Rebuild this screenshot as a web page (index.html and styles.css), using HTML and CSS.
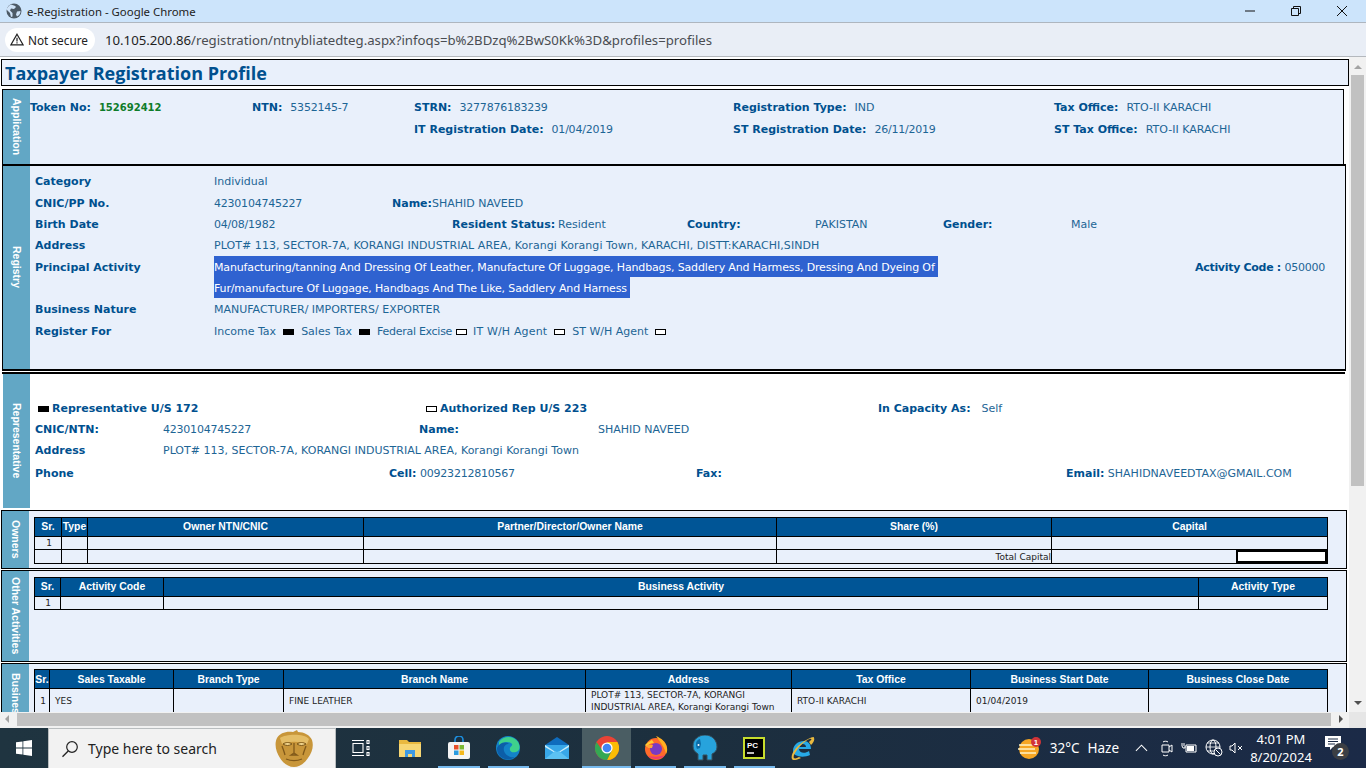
FILE: index.html
```html
<!DOCTYPE html>
<html lang="en">

<head>
    <meta charset="UTF-8">
    <meta name="viewport" content="width=device-width, initial-scale=1.0">
    <title>e-Registration - Google Chrome</title>
    <link rel="stylesheet" href="styles.css">
</head>

<body>
    <div class="titlebar">
        <svg class="globe" width="16" height="16" viewBox="0 0 16 16"><circle cx="8" cy="8" r="7.5" fill="#4d5a66"/><path d="M5 1.5c2 1 4 1 5 2.5l-2 2-3-.5-1 2 2.5 2.5v3.500l-1.500.5-1-4-3.500-3.500C1.500 4 3 2.500 5 1.500zM11 8.500l3.500-.5c0 2.500-1 4.500-3.500 5.500l-1-2z" fill="#cfe3f8"/></svg>
        <span class="wintitle">e-Registration - Google Chrome</span>
        <div class="wincontrols">
            <svg width="12" height="12" viewBox="0 0 12 12"><path d="M1 6h10" stroke="#111" fill="none"/></svg>
            <svg width="12" height="12" viewBox="0 0 12 12"><path d="M1.5 3.500h7v7h-7zM3.500 3.500v-2h7v7h-2" stroke="#111" fill="none"/></svg>
            <svg width="12" height="12" viewBox="0 0 12 12"><path d="M1 1l10 10M11 1L1 11" stroke="#111" fill="none"/></svg>
        </div>
    </div>
    <div class="toolbar">
        <div class="secure">
            <svg width="14" height="13" viewBox="0 0 14 13"><path d="M7 1.200l6 10.600H1z" fill="none" stroke="#222" stroke-width="1.200"/><path d="M7 4.800v3.600M7 9.300v1.200" stroke="#222" stroke-width="1.200"/></svg>
            <span>Not secure</span>
        </div>
        <span class="url">10.105.200.86<span class="urlpath">/registration/ntnybliatedteg.aspx?infoqs=b%2BDzq%2BwS0Kk%3D&amp;profiles=profiles</span></span>
    </div>

    <div class="browser">
        <div class="viewport">
            <div class="page">
                <h1 class="pagetitle">Taxpayer Registration Profile</h1>

                <section class="panel panel-app">
                    <div class="side"><span>Application</span></div>
                    <div class="app-grid">
                        <div class="app-token"><b>Token No:</b><b class="token">152692412</b></div>
                        <div><b>NTN:</b><span class="n">5352145-7</span></div>
                        <div><b>STRN:</b><span class="n">3277876183239</span></div>
                        <div><b>Registration Type:</b><span>IND</span></div>
                        <div><b>Tax Office:</b><span>RTO-II KARACHI</span></div>
                        <div></div>
                        <div></div>
                        <div><b>IT Registration Date:</b><span class="n">01/04/2019</span></div>
                        <div><b>ST Registration Date:</b><span class="n">26/11/2019</span></div>
                        <div><b>ST Tax Office:</b><span>RTO-II KARACHI</span></div>
                    </div>
                </section>

                <section class="panel panel-reg">
                    <div class="side"><span>Registry</span></div>
                    <div class="reg-body">
                        <div class="row"><b>Category</b><span>Individual</span></div>
                        <div class="row row-name"><b>CNIC/PP No.</b><span class="n">4230104745227</span><span><b>Name:</b>SHAHID NAVEED</span></div>
                        <div class="row row-birth"><b>Birth Date</b><span class="n">04/08/1982</span><b>Resident Status:</b><span>Resident</span><b>Country:</b><span>PAKISTAN</span><b>Gender:</b><span>Male</span></div>
                        <div class="row"><b>Address</b><span class="wide">PLOT# 113, SECTOR-7A, KORANGI INDUSTRIAL AREA, Korangi Korangi Town, KARACHI, DISTT:KARACHI,SINDH</span></div>
                        <div class="row row-activity">
                            <b>Principal Activity</b>
                            <div class="activity-text"><span class="picked">Manufacturing/tanning And Dressing Of Leather, Manufacture Of Luggage, Handbags, Saddlery And Harmess, Dressing And Dyeing Of<br>Fur/manufacture Of Luggage, Handbags And The Like, Saddlery And Harness</span></div>
                            <div class="activity-code"><b>Activity Code :</b> <span class="n">050000</span></div>
                        </div>
                        <div class="row"><b>Business Nature</b><span>MANUFACTURER/ IMPORTERS/ EXPORTER</span></div>
                        <div class="row row-register">
                            <b>Register For</b>
                            <div class="checks">
                                <span>Income Tax</span><i class="box on"></i>
                                <span>Sales Tax</span><i class="box on"></i>
                                <span class="tight-text">Federal Excise</span><i class="box tight"></i>
                                <span class="wide-text">IT W/H Agent</span><i class="box"></i>
                                <span>ST W/H Agent</span><i class="box"></i>
                            </div>
                        </div>
                    </div>
                </section>

                <section class="panel-rep">
                    <div class="side"><span>Representative</span></div>
                    <div class="rep-body">
                        <div class="rep-top">
                            <div class="rep-a"><i class="box on"></i><b>Representative U/S 172</b></div>
                            <div class="rep-b"><i class="box"></i><b>Authorized Rep U/S 223</b></div>
                            <div><b>In Capacity As:</b><span class="gap">Self</span></div>
                        </div>
                        <div class="row row-cnic"><b>CNIC/NTN:</b><span class="n">4230104745227</span><b>Name:</b><span>SHAHID NAVEED</span></div>
                        <div class="row row-addr"><b>Address</b><span>PLOT# 113, SECTOR-7A, KORANGI INDUSTRIAL AREA, Korangi Korangi Town</span></div>
                        <div class="row row-phone"><b>Phone</b><div><b>Cell:</b> <span class="n">00923212810567</span></div><b>Fax:</b><div><b>Email:</b> SHAHIDNAVEEDTAX@GMAIL.COM</div></div>
                    </div>
                </section>

                <section class="panel panel-owners">
                    <div class="side"><span>Owners</span></div>
                    <div class="table-wrap">
                        <table class="grid t-owners">
                            <tr><th>Sr.</th><th>Type</th><th>Owner NTN/CNIC</th><th>Partner/Director/Owner Name</th><th>Share (%)</th><th>Capital</th></tr>
                            <tr><td class="num">1</td><td></td><td></td><td></td><td></td><td></td></tr>
                            <tr class="total"><td></td><td></td><td></td><td></td><td class="right">Total Capital</td><td class="capital-cell"><div class="capital-box"></div></td></tr>
                        </table>
                    </div>
                </section>

                <section class="panel panel-other">
                    <div class="side"><span>Other Activities</span></div>
                    <div class="table-wrap">
                        <table class="grid t-other">
                            <tr><th>Sr.</th><th>Activity Code</th><th>Business Activity</th><th>Activity Type</th></tr>
                            <tr><td class="num">1</td><td></td><td></td><td></td></tr>
                        </table>
                    </div>
                </section>

                <section class="panel panel-bus">
                    <div class="side"><span>Business</span></div>
                    <div class="table-wrap">
                        <table class="grid t-bus">
                            <tr><th>Sr.</th><th>Sales Taxable</th><th>Branch Type</th><th>Branch Name</th><th>Address</th><th>Tax Office</th><th>Business Start Date</th><th>Business Close Date</th></tr>
                            <tr class="tall"><td class="num">1</td><td>YES</td><td></td><td>FINE LEATHER</td><td class="addr">PLOT# 113, SECTOR-7A, KORANGI INDUSTRIAL AREA, Korangi Korangi Town</td><td>RTO-II KARACHI</td><td>01/04/2019</td><td></td></tr>
                        </table>
                    </div>
                </section>
            </div>
            <div class="vscroll">
                <i class="arrow up"></i>
                <div class="vthumb"></div>
                <i class="arrow down"></i>
            </div>
        </div>
        <div class="hscroll">
            <i class="arrow left"></i>
            <div class="hthumb"></div>
            <i class="arrow right"></i>
        </div>
    </div>

    <div class="taskbar">
        <div class="startbtn">
            <svg width="16" height="16" viewBox="0 0 16 16"><path d="M0 2.300l6.500-.9v6.200H0zM7.300 1.300L16 0v7.600H7.300zM0 8.400h6.500v6.200L0 13.700zM7.300 8.400H16V16l-8.700-1.300z" fill="#fff"/></svg>
        </div>
        <div class="searchbox">
            <svg width="18" height="18" viewBox="0 0 18 18"><circle cx="11" cy="7" r="5.300" fill="none" stroke="#222" stroke-width="1.200"/><path d="M7.200 11L1.500 16.800" stroke="#222" stroke-width="1.300"/></svg>
            <span>Type here to search</span>
            <svg class="mask" width="40" height="37" viewBox="0 0 40 37">
                <path d="M3 8C6 3 12 1 19 2l4-2 1 2c6 0 12 3 14 8 2 6 0 13-4 18-4 6-9 9-14 9-6 0-11-4-14-9C2 22 0 14 3 8z" fill="#c8963a"/>
                <path d="M6 8c5-4 24-5 29 1l-2 5c-6-3-20-3-25 0z" fill="#e4bd66"/>
                <path d="M9 14c3-2 6-2 9 0-3 2-6 2-9 0zM23 14c3-2 6-2 9 0-3 2-6 2-9 0z" fill="#f0d48c" stroke="#7a5516"/>
                <path d="M20 13v10l-3 2h6l-3-2M12 29c5 2 11 2 16 0M11 25c-1-4-2-6-3-9M29 25c1-4 2-6 3-9" stroke="#80591a" stroke-width="1.300" fill="none"/>
            </svg>
        </div>
        <div class="taskicons">
            <div class="tb">
                <svg width="20" height="18" viewBox="0 0 20 18"><path d="M1 1.500h12M1 16.500h12M2 4.500h10v9H2zM16 1.500h2v3h-2zM16 7.500h2v3h-2zM16 13.500h2v3h-2z" stroke="#fff" stroke-width="1.100" fill="none"/></svg>
            </div>
            <div class="tb">
                <svg width="22" height="18" viewBox="0 0 22 18"><path d="M0 1h8l2 2h12v15H0z" fill="#e9b93f"/><path d="M0 5h22v13H0z" fill="#f7d774"/><path d="M6 11h10v7h-3v-3H9v3H6z" fill="#3e9ae3"/></svg>
            </div>
            <div class="tb">
                <svg width="24" height="24" viewBox="0 0 24 24"><path d="M8 6V4a4 4 0 0 1 8 0v2" stroke="#1c8fe0" stroke-width="1.600" fill="none"/><rect x="1" y="6" width="22" height="17" rx="2" fill="#f4f4f4"/><rect x="7" y="9" width="4.500" height="4.500" fill="#e8502a"/><rect x="12.500" y="9" width="4.500" height="4.500" fill="#7cb934"/><rect x="7" y="14.500" width="4.500" height="4.500" fill="#2a9be0"/><rect x="12.500" y="14.500" width="4.500" height="4.500" fill="#f5b81c"/></svg>
                <i class="run"></i>
            </div>
            <div class="tb">
                <svg width="24" height="24" viewBox="0 0 24 24"><circle cx="12" cy="12" r="12" fill="#1383c8"/><path d="M3 6C7 0 17-1 22 6c2.500 4 2 9-2 10-4 1-7-1-6-4 .5-2 3-2 2-4-2-3-9-3-13 2z" fill="#3fd18c"/><path d="M1 12c2-5 8-7 12-4-4 0-6 3-5 7 1 4 6 7 11 6-5 4-12 3-16-2-1.500-2-2-4.500-2-7z" fill="#0c5ea8"/></svg>
                <i class="run"></i>
            </div>
            <div class="tb">
                <svg width="24" height="22" viewBox="0 0 24 22"><path d="M12 0L0 8l12 8 12-8z" fill="#0f6cbd"/><path d="M0 8h24v14H0z" fill="#38a7e8"/><path d="M0 8l12 8 12-8v2l-12 7L0 10z" fill="#c8ecfb"/><path d="M0 22l10-8 2 1 2-1 10 8z" fill="#5cc1f2"/></svg>
            </div>
            <div class="tb tb-active">
                <svg width="24" height="24" viewBox="0 0 24 24"><circle cx="12" cy="12" r="12" fill="#ea4335"/><path d="M12 24a12 12 0 0 0 10.400-18H12l5 8z" fill="#fbbc05"/><path d="M1.600 6a12 12 0 0 0 10.400 18l5-10-5 3z" fill="#34a853"/><path d="M1.600 6L7 14l5-7z" fill="#ea4335"/><circle cx="12" cy="12" r="5.600" fill="#fff"/><circle cx="12" cy="12" r="4.300" fill="#4285f4"/></svg>
                <i class="run wide"></i>
            </div>
            <div class="tb">
                <svg width="24" height="24" viewBox="0 0 24 24"><circle cx="12" cy="13" r="11" fill="#ff6a2a"/><path d="M12 0c5 2 10 6 11 12 .5 2 0 4-1 6-1-6-5-11-10-18z" fill="#ffb21f"/><path d="M1 9c3-3 7-5 7-5l2 3c-3 0-6 1-7 4z" fill="#ffcb2f"/><circle cx="12" cy="13" r="6" fill="#7a3ac2"/><path d="M2 9h7l-1 3H4z" fill="#ffa336"/><path d="M4 20c4 4 13 4 17-1-4 2-12 2-17 1z" fill="#f13a6f"/></svg>
                <i class="run"></i>
            </div>
            <div class="tb">
                <svg width="26" height="26" viewBox="0 0 26 26"><path d="M1 11C1 4 7 0 13 0c7 0 12 5 12 12 0 4-3 6-5 7v6h-5v-5h-4v5H6v-6c-3-2-5-4-5-8z" fill="#27a3dc" stroke="#36505e"/><path d="M8 4C4 5 3 9 5 14l3-1 1-4z" fill="#0d6da8"/><circle cx="6.500" cy="10" r="1" fill="#fff"/></svg>
                <i class="run"></i>
            </div>
            <div class="tb">
                <svg width="22" height="22" viewBox="0 0 22 22"><rect width="22" height="22" fill="#c7dd2d"/><rect x="2" y="2" width="18" height="18" fill="#000"/><text x="4" y="11" class="pc">PC</text><path d="M4 16h7" stroke="#fff" stroke-width="1.500"/></svg>
                <i class="run"></i>
            </div>
            <div class="tb">
                <svg width="24" height="24" viewBox="0 0 24 24"><path d="M2 15c0-6 5-10 11-10 4 0 7 3 7 8H8c0 4 6 5 10 2l1 4c-6 3-17 2-17-4zM8 11h7c0-4-6-4-7 0z" fill="#27a9e6"/><path d="M1 23c-2-4 4-14 16-20 4-2 6-3 6-1 1 2-1 5-3 7l-2-3c2-2 3-3 2-3-1-1-9 4-14 11-3 4-4 7-3 8 1 1 3 0 5-1l2 1c-4 2-8 3-9 1z" fill="#e9b93f"/></svg>
            </div>
        </div>
        <div class="tray">
            <svg class="weather" width="24" height="22" viewBox="0 0 24 22"><circle cx="11" cy="12" r="10" fill="#f6a623"/><path d="M1 8h14M0 12h17M2 16h16" stroke="#fff2c4" stroke-width="1.400"/><circle cx="18" cy="5" r="5" fill="#d13438"/><text x="18" y="8" class="badge1">1</text></svg>
            <span class="temp">32°C</span>
            <span class="haze">Haze</span>
            <svg class="t-chev" width="13" height="8" viewBox="0 0 14 8"><path d="M1 7l6-6 6 6" stroke="#fff" stroke-width="1.100" fill="none"/></svg>
            <svg class="t-cam" width="12" height="18" viewBox="0 0 12 18"><path d="M1 6h7v7H1zM8 8l3-2v7l-3-2M2 3c1-1 4-1 5 0M2 16c1 1 4 1 5 0" stroke="#fff" fill="none"/></svg>
            <svg class="t-bat" width="16" height="12" viewBox="0 0 16 12"><path d="M5 3h10v7H5z" stroke="#fff" fill="none"/><path d="M6 4h7v5H6z" fill="#fff"/><path d="M1 1v3l1 2h2V4M3 1v3" stroke="#fff" fill="none"/></svg>
            <svg class="t-net" width="18" height="18" viewBox="0 0 18 18"><circle cx="8" cy="8" r="7" stroke="#fff" fill="none"/><ellipse cx="8" cy="8" rx="3" ry="7" stroke="#fff" fill="none"/><path d="M1 8h14M2 4h12M2 12h12" stroke="#fff" stroke-width=".8"/><circle cx="13" cy="13" r="4" fill="#1b2a45" stroke="#fff"/><path d="M10.500 10.500l5 5" stroke="#fff"/></svg>
            <svg class="t-vol" width="15" height="12" viewBox="0 0 15 12"><path d="M1 4h2l3-3v10L3 8H1zM9 4l4 4M13 4l-4 4" stroke="#fff" fill="none"/></svg>
            <div class="clock"><span>4:01 PM</span><span>8/20/2024</span></div>
            <div class="notify">
                <svg width="16" height="14" viewBox="0 0 16 14"><path d="M0 0h16v11H8l-3 3v-3H0z" fill="#fff"/><path d="M3 3h10M3 5.500h10M3 8h7" stroke="#1b2a45"/></svg>
                <span class="count">2</span>
            </div>
        </div>
    </div>
</body>

</html>
```

FILE: styles.css
```css
* {
    box-sizing: border-box;
    margin: 0;
    padding: 0;
}

html,
body {
    width: 1366px;
    height: 768px;
    overflow: hidden;
}

body {
    display: flex;
    flex-direction: column;
    background: #fff;
    font-family: "DejaVu Sans", sans-serif;
    font-size: 11px;
    color: #1d6595;
}

b {
    color: #00508f;
}

/* browser chrome */
.titlebar {
    flex: none;
    height: 23px;
    display: flex;
    align-items: center;
    padding-left: 6px;
    background: #cce4fb;
    border-bottom: 1px solid #aeb6bf;
}

.wintitle {
    margin-left: 5px;
    font-family: "Noto Sans", sans-serif;
    font-size: 11.4px;
    color: #222;
}

.wincontrols {
    margin-left: auto;
    display: flex;
    gap: 34px;
    padding-right: 18px;
}

.toolbar {
    flex: none;
    height: 34px;
    display: flex;
    align-items: center;
    padding-left: 5px;
    background: #e9eef6;
    border-bottom: 1px solid #b4b8bd;
    font-family: "Noto Sans", sans-serif;
}

.secure {
    width: 90px;
    height: 24px;
    display: flex;
    align-items: center;
    gap: 4px;
    padding-left: 5px;
    border-radius: 12px;
    background: #fff;
    font-size: 11.8px;
    color: #222;
}

.url {
    margin-left: 10px;
    font-size: 13.2px;
    color: #1f1f1f;
}

.urlpath {
    color: #4a4d52;
}

/* page area */
.browser {
    flex: none;
    height: 671px;
    display: flex;
    flex-direction: column;
}

.viewport {
    flex: none;
    height: 655px;
    display: flex;
}

.page {
    flex: none;
    width: 1349px;
    height: 655px;
    overflow: hidden;
    padding: 2px 0 0 1px;
}

.pagetitle {
    height: 27px;
    padding-left: 3px;
    line-height: 26px;
    background: #e9f0fb;
    border: 1px solid #000;
    font-size: 18px;
    font-weight: bold;
    color: #00508f;
    font-family: "Open Sans", sans-serif;
}

.panel {
    display: flex;
    background: #e9f0fb;
    border: 1px solid #000;
}

.panel-rep {
    display: flex;
    width: 1343px;
    height: 136px;
    margin: 1px 0 0 1px;
    padding-left: 1px;
    background: #fff;
    border-top: 2px solid #000;
}

.side {
    flex: none;
    width: 27px;
    display: flex;
    align-items: center;
    justify-content: center;
    background: #62a7c5;
}

.side span {
    writing-mode: vertical-rl;
    font-family: "Liberation Sans", sans-serif;
    font-size: 10.5px;
    font-weight: bold;
    color: #fff;
    white-space: nowrap;
}

.panel-app {
    height: 75px;
    width: 1342px;
    margin: 3px 0 0 1px;
    border-width: 1px 1px 0 1px;
}

.app-grid {
    flex: 1;
    display: grid;
    grid-template-columns: 222px 162px 319px 321px auto;
    grid-auto-rows: 22px;
    align-content: start;
    padding-top: 7px;
    line-height: 22px;
}

.app-grid > div {
    white-space: nowrap;
}

.app-grid span,
.token {
    margin-left: 8px;
}

.token {
    color: #0e7c2a;
    font-size: 10px;
}

.n {
    letter-spacing: -.22px;
}

.wide {
    letter-spacing: .06px;
}

.panel-reg {
    height: 207px;
    width: 1344px;
    margin-left: 1px;
    border-width: 2px 1px 2px 1px;
}

.reg-body {
    flex: 1;
    padding: 5px 0 0 5px;
}

.row {
    display: grid;
    grid-template-columns: 179px auto;
    justify-content: start;
    min-height: 21px;
    line-height: 21px;
    white-space: nowrap;
}

.row-name {
    grid-template-columns: 179px 178px auto;
    height: 22px;
    line-height: 23px;
}

.row-birth {
    grid-template-columns: 179px 238px 106px 129px 128px 128px 128px auto;
}

.row-activity {
    grid-template-columns: 179px 740px auto;
    height: 42px;
    margin-top: 1px;
}

.row-register {
    margin-top: 1px;
}

.activity-code {
    margin-left: 241px;
}

.activity-code b {
    letter-spacing: -.3px;
}

.activity-text {
    white-space: nowrap;
}

.picked {
    background: #2f62d0;
    color: #fff;
    padding: 5px 3px 3px 0;
    letter-spacing: -.15px;
    -webkit-box-decoration-break: clone;
    box-decoration-break: clone;
}

.checks {
    display: flex;
    align-items: center;
}

.tight-text {
    letter-spacing: -.28px;
}

.wide-text {
    letter-spacing: .15px;
}

.box {
    flex: none;
    display: inline-block;
    width: 11px;
    height: 6px;
    margin: 1px 7px 0 7px;
    border: 1px solid #000;
    background: #fff;
}

.box.on {
    background: #000;
}

.box.tight {
    margin: 1px 6px 0 4px;
}

.rep-body {
    flex: 1;
    padding: 24px 0 0 5px;
}

.rep-top {
    display: flex;
    align-items: center;
    height: 21px;
}

.rep-top .box {
    margin: 1px 3px 0 0;
}

.rep-a {
    width: 391px;
    padding-left: 3px;
    display: flex;
    align-items: center;
}

.rep-b {
    width: 452px;
    display: flex;
    align-items: center;
}

.gap {
    margin-left: 11px;
}

.row-cnic {
    grid-template-columns: 128px 256px 179px auto;
}

.row-addr {
    grid-template-columns: 128px auto;
}

.row-phone {
    grid-template-columns: 354px 307px 370px auto;
    margin-top: 2px;
}

/* tables */
.panel-owners {
    width: 1346px;
    height: 59px;
    margin-top: 2px;
}

.panel-other {
    width: 1346px;
    height: 92px;
    margin-top: 1px;
}

.panel-bus {
    width: 1346px;
    height: 120px;
    margin-top: 1px;
}

.panel-bus .side {
    align-items: flex-start;
    padding-top: 9px;
}

.table-wrap {
    flex: 1;
    padding: 6px 0 0 5px;
}

.panel-bus .table-wrap {
    padding-top: 5px;
}

.grid {
    width: 1294px;
    table-layout: fixed;
    border-collapse: collapse;
    font-size: 9px;
    color: #222;
}

.grid th {
    height: 19px;
    padding-bottom: 1px;
    background: #005596;
    border: 1px solid #000;
    color: #fff;
    font-family: "Liberation Sans", sans-serif;
    font-size: 10.4px;
    font-weight: bold;
    text-align: center;
    white-space: nowrap;
    overflow: hidden;
}

.t-bus th {
    padding-bottom: 0;
}

.grid td {
    height: 13px;
    border: 1px solid #000;
    padding: 0 5px;
    white-space: nowrap;
}

.grid .num {
    text-align: right;
    padding: 0 9px 0 0;
}

.grid .total td {
    height: 14px;
}

.grid .right {
    text-align: right;
    padding: 0;
}

.grid .capital-cell {
    padding: 0;
}

.capital-box {
    width: 91px;
    height: 13px;
    margin-left: auto;
    background: #fff;
    border: 2px solid #000;
}

.t-owners th:nth-child(1) { width: 27px; }
.t-owners th:nth-child(2) { width: 26px; }
.t-owners th:nth-child(3) { width: 276px; }
.t-owners th:nth-child(4) { width: 413px; }
.t-owners th:nth-child(5) { width: 275px; }

.t-other th:nth-child(1) { width: 26px; }
.t-other th:nth-child(2) { width: 103px; }
.t-other th:nth-child(3) { width: 1035px; }

.t-bus th:nth-child(1) { width: 15px; }
.t-bus th:nth-child(2) { width: 124px; }
.t-bus th:nth-child(3) { width: 110px; }
.t-bus th:nth-child(4) { width: 302px; }
.t-bus th:nth-child(5) { width: 206px; }
.t-bus th:nth-child(6) { width: 179px; }
.t-bus th:nth-child(7) { width: 178px; }

.grid .tall td {
    height: 24px;
}

.t-bus .num {
    padding: 0 3px 0 0;
}

.grid .addr {
    white-space: normal;
    line-height: 12px;
}

/* scrollbars */
.vscroll {
    flex: none;
    width: 17px;
    display: flex;
    flex-direction: column;
    align-items: center;
    background: #f1f1f1;
    padding: 8px 0 7px;
}

.vthumb {
    width: 13px;
    height: 411px;
    margin-top: 6px;
    background: #c1c1c1;
}

.arrow {
    flex: none;
    width: 0;
    height: 0;
    border: 4px solid transparent;
}

.arrow.up {
    border-top: 0;
    border-bottom: 4px solid #a3a3a3;
}

.arrow.down {
    margin-top: auto;
    border-bottom: 0;
    border-top: 4px solid #505050;
}

.hscroll {
    flex: none;
    height: 16px;
    display: flex;
    align-items: center;
    padding: 0 23px 2px 5px;
    background: linear-gradient(90deg, #f1f1f1 1349px, #e6e6e6 1349px);
}

.hthumb {
    width: 1314px;
    height: 13px;
    margin-left: 8px;
    background: #c1c1c1;
}

.arrow.left {
    border-left: 0;
    border-right: 4px solid #a3a3a3;
}

.arrow.right {
    margin-left: auto;
    border-right: 0;
    border-left: 4px solid #505050;
}

/* taskbar */
.taskbar {
    flex: none;
    height: 40px;
    display: flex;
    align-items: center;
    background: linear-gradient(90deg, #1f3440 0%, #1c2f3e 50%, #1b2a47 100%);
    color: #fff;
}

.startbtn {
    width: 48px;
    display: flex;
    justify-content: center;
}

.searchbox {
    width: 288px;
    height: 40px;
    display: flex;
    align-items: center;
    padding-left: 12px;
    background: #f2f2f2;
    border: 1px solid #b9bdbf;
    border-bottom: 0;
    font-family: "Noto Sans", sans-serif;
    font-size: 14px;
    color: #222;
}

.searchbox span {
    margin-left: 9px;
}

.mask {
    margin-left: 57px;
}

.taskicons {
    display: flex;
    height: 40px;
}

.tb {
    position: relative;
    width: 49.2px;
    display: flex;
    align-items: center;
    justify-content: center;
}

.tb-active {
    background: #4a5d63;
}

.pc {
    font-family: "Liberation Sans", sans-serif;
    font-size: 8px;
    font-weight: bold;
    fill: #fff;
}

.run {
    position: absolute;
    left: 4px;
    right: 4px;
    bottom: 0;
    height: 2px;
    background: #76b9ed;
}

.run.wide {
    left: 0;
    right: 0;
}

.tray {
    margin-left: auto;
    display: flex;
    align-items: center;
    padding-right: 17px;
    font-family: "Noto Sans", sans-serif;
}

.temp,
.haze {
    margin-left: 8px;
    font-size: 13.5px;
}

.t-chev { margin-left: 16px; }
.t-cam { margin-left: 13px; }
.t-bat { margin-left: 8px; }
.t-net { margin-left: 8px; }
.t-vol { margin-left: 6px; }

.clock {
    width: 52px;
    display: flex;
    flex-direction: column;
    align-items: center;
    font-size: 13px;
    line-height: 18px;
    margin: 0 18px 0 11px;
    white-space: nowrap;
}

.badge1 {
    font-family: "Liberation Sans", sans-serif;
    font-size: 8px;
    font-weight: bold;
    fill: #fff;
    text-anchor: middle;
}

.notify {
    position: relative;
    width: 24px;
    height: 24px;
}

.count {
    position: absolute;
    top: 7px;
    left: 7px;
    width: 17px;
    height: 17px;
    line-height: 17px;
    border-radius: 50%;
    background: #3c3f44;
    text-align: center;
    font-size: 11px;
    font-weight: bold;
}
```
